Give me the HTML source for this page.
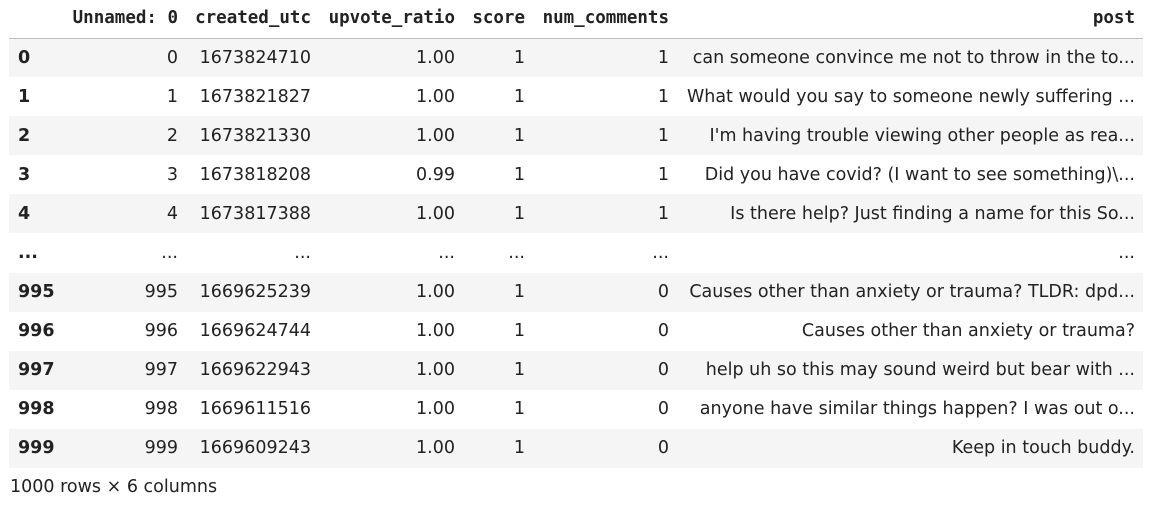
<!DOCTYPE html>
<html><head><meta charset="utf-8"><style>
body{margin:0;background:#fff;font-family:"DejaVu Sans","Liberation Sans",sans-serif;font-size:17.5px;color:#222;}
table{position:absolute;left:9px;top:0;border-collapse:collapse;table-layout:fixed;width:1134px;}
th,td{padding:0 8px;height:39.1px;text-align:right;white-space:nowrap;overflow:hidden;box-sizing:border-box;}
thead th{font-family:"DejaVu Sans Mono",monospace;font-weight:bold;height:38px;border-bottom:1px solid #bdbdbd;padding-bottom:1px;}
tbody th{text-align:left;font-weight:bold;padding-left:9px;}
tbody tr:nth-child(odd){background:#f5f5f5;}
.cap{position:absolute;left:10px;top:477px;font-size:17.5px;}
</style></head><body>
<table>
<colgroup><col style="width:54px"><col style="width:123px"><col style="width:133px"><col style="width:144px"><col style="width:70px"><col style="width:144px"><col style="width:466px"></colgroup>
<thead><tr><th></th><th>Unnamed: 0</th><th>created_utc</th><th>upvote_ratio</th><th>score</th><th>num_comments</th><th>post</th></tr></thead>
<tbody>
<tr><th>0</th><td>0</td><td>1673824710</td><td>1.00</td><td>1</td><td>1</td><td>can someone convince me not to throw in the to...</td></tr>
<tr><th>1</th><td>1</td><td>1673821827</td><td>1.00</td><td>1</td><td>1</td><td>What would you say to someone newly suffering ...</td></tr>
<tr><th>2</th><td>2</td><td>1673821330</td><td>1.00</td><td>1</td><td>1</td><td>I'm having trouble viewing other people as rea...</td></tr>
<tr><th>3</th><td>3</td><td>1673818208</td><td>0.99</td><td>1</td><td>1</td><td>Did you have covid? (I want to see something)\...</td></tr>
<tr><th>4</th><td>4</td><td>1673817388</td><td>1.00</td><td>1</td><td>1</td><td>Is there help? Just finding a name for this So...</td></tr>
<tr><th>...</th><td>...</td><td>...</td><td>...</td><td>...</td><td>...</td><td>...</td></tr>
<tr><th>995</th><td>995</td><td>1669625239</td><td>1.00</td><td>1</td><td>0</td><td>Causes other than anxiety or trauma? TLDR: dpd...</td></tr>
<tr><th>996</th><td>996</td><td>1669624744</td><td>1.00</td><td>1</td><td>0</td><td>Causes other than anxiety or trauma?</td></tr>
<tr><th>997</th><td>997</td><td>1669622943</td><td>1.00</td><td>1</td><td>0</td><td>help uh so this may sound weird but bear with ...</td></tr>
<tr><th>998</th><td>998</td><td>1669611516</td><td>1.00</td><td>1</td><td>0</td><td>anyone have similar things happen? I was out o...</td></tr>
<tr><th>999</th><td>999</td><td>1669609243</td><td>1.00</td><td>1</td><td>0</td><td>Keep in touch buddy.</td></tr>
</tbody></table>
<div class="cap">1000 rows × 6 columns</div>
</body></html>
